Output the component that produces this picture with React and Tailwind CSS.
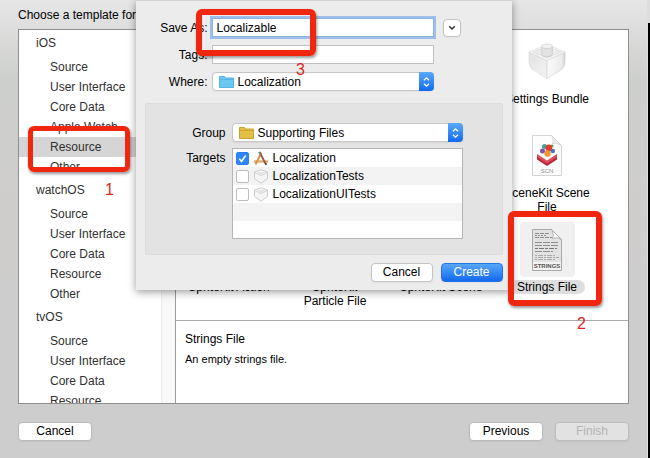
import clsx from "clsx";

const groups = [
  { name: "iOS", items: ["Source", "User Interface", "Core Data", "Apple Watch", "Resource", "Other"] },
  { name: "watchOS", items: ["Source", "User Interface", "Core Data", "Resource", "Other"] },
  { name: "tvOS", items: ["Source", "User Interface", "Core Data", "Resource"] },
];

const targets = [
  { name: "Localization", checked: true },
  { name: "LocalizationTests", checked: false },
  { name: "LocalizationUITests", checked: false },
];

function BrickIcon() {
  return (
    <svg width="38" height="37" viewBox="0 0 40 38">
      <defs>
        <linearGradient id="brickLeft" x1="0" y1="0" x2="1" y2="1">
          <stop offset="0" stopColor="#e2e2e2" />
          <stop offset="1" stopColor="#f3f3f3" />
        </linearGradient>
        <linearGradient id="brickRight" x1="0" y1="0" x2="1" y2="0">
          <stop offset="0" stopColor="#fbfbfb" />
          <stop offset=".8" stopColor="#ececec" />
          <stop offset="1" stopColor="#d2d2d2" />
        </linearGradient>
      </defs>
      <path d="M1 9 L20 18 V37 L4 27 Q2 25 1 20Z" fill="url(#brickLeft)" stroke="#dedede" strokeWidth=".7" />
      <path d="M39 9 L20 18 V37 L36 27 Q38 25 39 20Z" fill="url(#brickRight)" stroke="#d0d0d0" strokeWidth=".7" />
      <path d="M1 9 L13 4 H27 L39 9 L20 18Z" fill="#f8f8f8" stroke="#d8d8d8" strokeWidth=".7" />
      <path d="M5 9 L14 5.500 H26 L35 9 L20 15.500Z" fill="#ececec" stroke="#d6d6d6" strokeWidth=".6" />
      <path d="M14.500 3v8.500c0 3.200 11 3.200 11 0V3z" fill="#e2e2e2" stroke="#c4c4c4" strokeWidth=".7" />
      <ellipse cx="20" cy="3" rx="5.500" ry="2.300" fill="#f3f3f3" stroke="#c8c8c8" strokeWidth=".7" />
    </svg>
  );
}

function SceneIcon() {
  return (
    <svg width="30" height="41" viewBox="0 0 30 41">
      <path d="M.5.5h19l10 10v30h-29z" fill="#fdfdfd" stroke="#d4d4d4" />
      <path d="M19.500.5c2 3 2 5 1 8 3 0 6 0 9 2z" fill="#ececec" stroke="#cfcfcf" strokeWidth=".7" />
      <path d="M5 20.500l10 6 10-6v4l-10 6.500-10-6.500z" fill="#b92a3b" />
      <path d="M5 19l10 6.500 10-6.500v3l-10 6.500-10-6.500z" fill="#dd4c58" />
      <circle cx="12.500" cy="11.500" r="2.500" fill="#3aa69b" />
      <circle cx="10.500" cy="16" r="2.500" fill="#7d50b0" />
      <circle cx="20.800" cy="16" r="2.300" fill="#3f78c9" />
      <circle cx="20" cy="11" r="1.600" fill="#57a63b" />
      <circle cx="16.800" cy="13" r="3.400" fill="#df3b30" />
      <circle cx="15.500" cy="18.500" r="3.200" fill="#f0962a" />
      <text x="15" y="38" textAnchor="middle" fontSize="6" fill="#8b8b8b" fontFamily="Liberation Sans">
        SCN
      </text>
    </svg>
  );
}

function StringsIcon() {
  return (
    <svg width="30" height="42" viewBox="0 0 30 42">
      <path d="M.5.5h19l10 10v31h-29z" fill="#e2e2e2" stroke="#a9a9a9" />
      <g stroke="#8e8e8e" strokeWidth="1">
        <path d="M3 4.500h15M3 8.500h17" strokeDasharray="4 1" />
        <path d="M3 6.500h12" strokeDasharray="2 1" />
        <path d="M3 13.500h24M3 16.500h23M3 22.500h18" strokeDasharray="7 1" />
        <path d="M3 19.500h22" strokeDasharray="3 1 5 1" stroke="#777" />
        <path d="M3 26.500h21M3 28.500h24M3 30.500h20" strokeDasharray="2 1 5 1" stroke="#aaa" />
      </g>
      <path d="M19.500.5c2 3 2 6 1 9 3-1 6-1 9 1z" fill="#fafafa" stroke="#a2a2a2" strokeWidth=".8" />
      <path d="M1 33h28v8H1z" fill="#f3f3f3" />
      <text x="15" y="39" textAnchor="middle" fontSize="6" fontWeight="bold" fill="#555" fontFamily="Liberation Sans">
        STRINGS
      </text>
    </svg>
  );
}

function FolderIcon({ color, edge }) {
  return (
    <svg className="pointer-events-none absolute left-[7px] top-[3px]" width="15" height="13" viewBox="0 0 15 13">
      <path d="M.5 1.500h5l1 1.500h8v9.500H.5z" fill={color} stroke={edge} />
      <path d="M1 4.500h13" stroke={edge} strokeWidth=".8" />
    </svg>
  );
}

function AppIcon() {
  return (
    <svg width="16" height="15" viewBox="0 0 16 15">
      <path d="M1 10.500h14" stroke="#deb06c" strokeWidth="2.400" />
      <path d="M8.500 1.500L2.500 13.500" stroke="#dc9440" strokeWidth="2" />
      <path d="M6.500 1l6.500 12.500" stroke="#9a5544" strokeWidth="1.800" />
      <path d="M6 .8l1.500 3" stroke="#7d8890" strokeWidth="1.800" />
      <path d="M12.300 12l1 2" stroke="#5d4b45" strokeWidth="1.500" />
    </svg>
  );
}

function TestIcon() {
  return (
    <svg width="16" height="15" viewBox="0 0 16 15">
      <path d="M1.500 3L8 .8 14.500 3v6.500L8 14.200 1.500 9.500z" fill="#f5f5f5" stroke="#cbcbcb" />
      <path d="M2 3.500L8 6.500l6-3M5.500 2.800c0 2 5 2 5 0" fill="none" stroke="#d3d3d3" />
    </svg>
  );
}

function Popup({ id, value, color, edge }) {
  return (
    <div className="relative flex-1">
      <select
        id={id}
        className="block h-[19px] w-full appearance-none rounded border border-[#c6c6c6] bg-white pl-[25px] text-black shadow-xs"
      >
        <option>{value}</option>
      </select>
      <FolderIcon color={color} edge={edge} />
      <span className="pointer-events-none absolute inset-y-0 right-0 flex w-[15px] items-center justify-center rounded-r bg-linear-to-b from-[#5aa9f8] to-[#1168ee]">
        <svg width="9" height="12" viewBox="0 0 9 12" fill="none" stroke="#fff" strokeWidth="1.300">
          <path d="M2 4.200L4.500 1.800 7 4.200M2 7.800l2.500 2.400L7 7.800" />
        </svg>
      </span>
    </div>
  );
}

function Button({ children, className, ...rest }) {
  return (
    <button
      type="button"
      className={clsx("h-[19px] rounded border text-center leading-[17px] shadow-xs", className)}
      {...rest}
    >
      {children}
    </button>
  );
}

function Template({ icon, label, selected, className }) {
  return (
    <button type="button" className={clsx("flex flex-col items-center gap-[3px] px-2.5", className)}>
      <span className={clsx("flex size-[55px] items-center justify-center rounded", selected && "bg-[#f0f0f0]")}>
        {icon}
      </span>
      <span className={clsx("leading-[14px]", selected && "rounded-full bg-[#dedede] px-2")}>{label}</span>
    </button>
  );
}

function Sidebar() {
  return (
    <nav className="flex w-[157px] shrink-0 border-r border-[#9b9b9b] text-[#303030]">
      <div className="flex-1 overflow-hidden">
        {groups.map((group) => (
          <section key={group.name}>
            <h2 className="h-[27px] pl-[17px] leading-[27px]">{group.name}</h2>
            <ul>
              {group.items.map((item) => (
                <li key={item}>
                  <button
                    type="button"
                    className={clsx(
                      "block h-5 w-full pl-[31px] text-left leading-5",
                      group.name === "iOS" && item === "Resource" && "bg-[#d5d5d5]"
                    )}
                  >
                    {item}
                  </button>
                </li>
              ))}
            </ul>
          </section>
        ))}
      </div>
      <div className="w-[14px] border-l border-[#ededed] bg-[#f8f8f8]" />
    </nav>
  );
}

function SaveSheet() {
  return (
    <div className="absolute inset-x-0 top-0 mx-auto w-[376px] border-t border-[#d2d2d2] bg-[#ececec] px-[9px] pb-2 shadow-[0_2px_8px_rgba(0,0,0,0.4)]">
      <div className="flex flex-col gap-2 pt-[17px] pr-[42px]">
        <div className="flex items-center gap-1">
          <label htmlFor="save" className="w-[63px] text-right">
            Save As:
          </label>
          <input
            id="save"
            defaultValue="Localizable"
            className="h-[19px] w-[222px] border border-[#8fb3e0] bg-white px-1 outline-2 outline-[#9cbfec]"
          />
          <button
            type="button"
            aria-label="Expand"
            className="ml-[5px] flex size-[18px] items-center justify-center rounded border border-[#c4c4c4] bg-white shadow-xs"
          >
            <svg width="8" height="6" viewBox="0 0 8 6" fill="none" stroke="#333" strokeWidth="1.500">
              <path d="M1.200 1.200L4 4l2.800-2.800" />
            </svg>
          </button>
        </div>
        <div className="flex items-center gap-1">
          <label htmlFor="tags" className="w-[63px] text-right">
            Tags:
          </label>
          <input id="tags" className="h-[19px] w-[222px] border border-[#c0c0c0] bg-white px-1" />
        </div>
        <div className="flex w-[289px] items-center gap-1">
          <label htmlFor="where" className="w-[63px] text-right">
            Where:
          </label>
          <Popup id="where" value="Localization" color="#6cc6f2" edge="#55b3e3" />
        </div>
      </div>

      <div className="mt-3 flex flex-col gap-[6px] rounded-xs border border-[#dcdcdc] bg-[#e3e3e3] pt-[19px] pr-[39px] pb-[15px] pl-[5px]">
        <div className="flex items-center gap-[6px]">
          <label htmlFor="group" className="w-[75px] text-right">
            Group
          </label>
          <Popup id="group" value="Supporting Files" color="#e3bf45" edge="#c9a22c" />
        </div>
        <div role="group" aria-labelledby="targets" className="flex gap-[6px]">
          <span id="targets" className="w-[75px] pt-px text-right leading-[18px]">
            Targets
          </span>
          <ul className="h-[91px] flex-1 overflow-hidden border border-[#b5b5b5] bg-white">
            {targets.map((target) => (
              <li key={target.name} className="h-[18px] even:bg-[#f3f3f3]">
                <label className="flex h-[18px] items-center gap-1 pl-[3px]">
                  <span className="relative flex">
                    <input
                      type="checkbox"
                      defaultChecked={target.checked}
                      className="peer size-[13px] appearance-none rounded-xs border border-[#bdbdbd] bg-white checked:border-[#2c7ff0] checked:bg-[#2f86f6]"
                    />
                    <svg
                      className="pointer-events-none absolute inset-0 hidden peer-checked:block"
                      width="13"
                      height="13"
                      viewBox="0 0 13 13"
                    >
                      <path d="M3.300 6.800l2.300 2.700 4-6" fill="none" stroke="#fff" strokeWidth="1.500" />
                    </svg>
                  </span>
                  {target.checked ? <AppIcon /> : <TestIcon />}
                  {target.name}
                </label>
              </li>
            ))}
            <li className="h-[18px] bg-[#f3f3f3]" />
          </ul>
        </div>
      </div>

      <div className="mt-2 flex justify-end gap-2">
        <Button className="w-[62px] border-[#c4c4c4] bg-white">Cancel</Button>
        <Button className="w-[62px] border-[#2673e6] bg-linear-to-b from-[#57a6f8] to-[#1168f0] text-white">
          Create
        </Button>
      </div>
    </div>
  );
}

// red marker frame with its step number
function Marker({ className }) {
  return (
    <div
      className={clsx(
        "pointer-events-none absolute rounded-md border-[#f0260e] shadow-[1px_2px_3px_rgba(0,0,0,0.4)]",
        className
      )}
    />
  );
}

function Step({ className, children }) {
  return <span className={clsx("absolute text-base leading-4 text-[#e0261c]", className)}>{children}</span>;
}

export default function App() {
  return (
    <div className="relative flex h-screen overflow-hidden font-['Liberation_Sans',Arial,sans-serif] text-[12px] text-black">
      <main className="relative flex flex-1 flex-col bg-[linear-gradient(#e6e6e6,#cdcfcc_80px,#cfcdcc_220px,#cdcdcd_320px)] px-[18px]">
        <h1 className="h-[29px] leading-[31px]">Choose a template for</h1>

        <div className="flex min-h-0 flex-1 border border-[#8f8f8f] bg-white">
          <Sidebar />
          <div className="flex min-w-0 flex-1 flex-col">
            <div className="grid h-[291px] shrink-0 auto-rows-[94px] grid-cols-[repeat(4,106px)] overflow-hidden border-b border-[#ababab] pt-1">
              <Template className="col-start-4" icon={<BrickIcon />} label="Settings Bundle" />
              <Template className="col-start-4" icon={<SceneIcon />} label="SceneKit Scene File" />
              <Template label="SpriteKit Action" />
              <Template label="SpriteKit Particle File" />
              <Template label="SpriteKit Scene" />
              <Template icon={<StringsIcon />} label="Strings File" selected />
            </div>
            <div className="px-[9px] pt-2">
              <h2 className="leading-5">Strings File</h2>
              <p className="text-[11px] leading-5">An empty strings file.</p>
            </div>
          </div>
        </div>

        <footer className="flex h-[54px] shrink-0 gap-3 pt-[18px]">
          <Button className="mr-auto w-[74px] border-[#bababa] bg-white">Cancel</Button>
          <Button className="w-[74px] border-[#bababa] bg-white">Previous</Button>
          <Button className="w-[74px] border-[#bdbdbd] bg-[#e2e2e2] text-[#b4b4b4]" disabled>
            Finish
          </Button>
        </footer>

        <SaveSheet />
      </main>
      <div className="w-[3px] border-l border-[#dedede] bg-[linear-gradient(#dddddd_23px,#000000_23px)]" />

      <Marker className="left-[28px] top-[126px] h-[46px] w-[102px] border-[5px]" />
      <Step className="left-[105px] top-[182px]">1</Step>
      <Marker className="left-[508px] top-[211px] h-[95px] w-[94px] border-[6px]" />
      <Step className="left-[577px] top-[316px]">2</Step>
      <Marker className="left-[196px] top-[9px] h-[47px] w-[120px] border-[6px]" />
      <Step className="left-[296px] top-[62px]">3</Step>
    </div>
  );
}
